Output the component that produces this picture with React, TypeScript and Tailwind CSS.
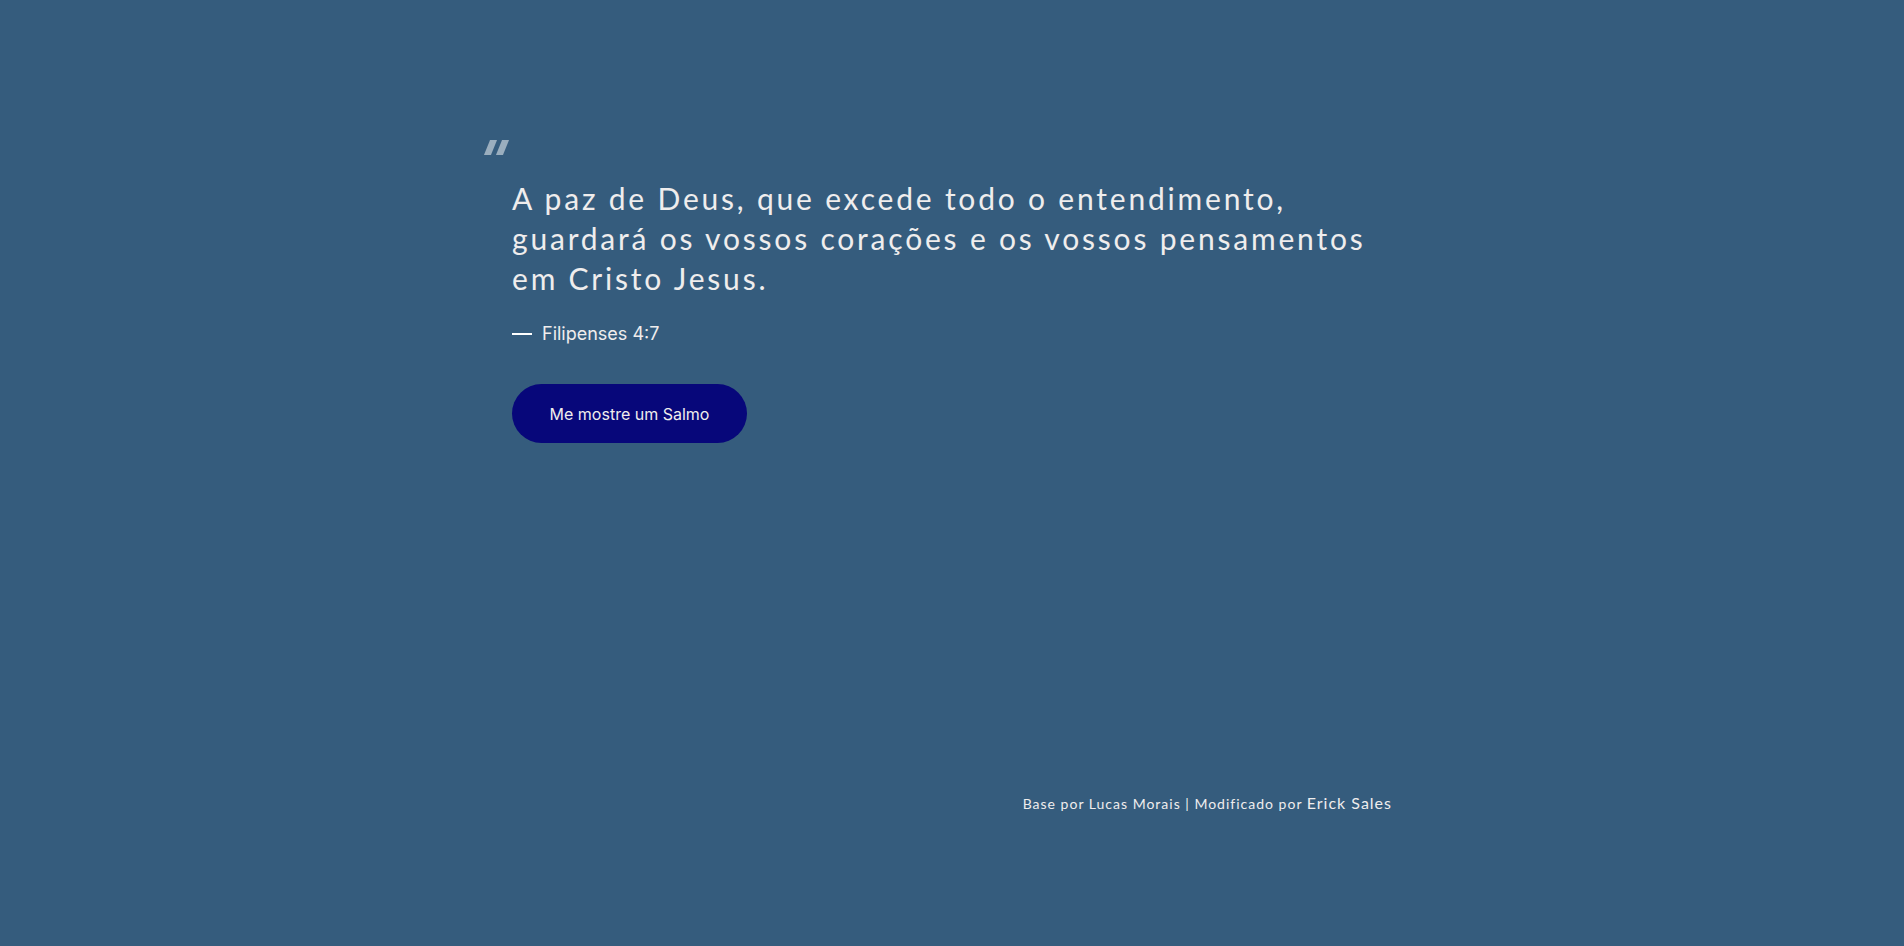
import React from "react";

export default function App() {
  return (
    <div className="min-h-screen w-full bg-[#355c7d] flex flex-col items-center font-['Inter',sans-serif]">
      <div className="w-[880px] pt-[133px] flex flex-col">
        {/* Quote */}
        <div className="relative">
          <span className="absolute -left-[25px] top-[7px] flex gap-[5px] -skew-x-[22deg]">
            <span className="w-[7px] h-[15px] bg-white/50" />
            <span className="w-[7px] h-[15px] bg-white/50" />
          </span>
          <p className="pt-[45px] text-[30px] leading-[40px] tracking-[2.8px] font-normal text-[#efeded] font-['Lato',sans-serif]">
            A paz de Deus, que excede todo o entendimento,
            <br />
            guardará os vossos corações e os vossos pensamentos
            <br />
            em Cristo Jesus.
          </p>
        </div>

        {/* Reference */}
        <div className="mt-[22px] flex items-center gap-[10px] text-[#efeded]">
          <span className="w-[20px] h-[2px] bg-white" />
          <span className="text-[18px] leading-[28px]">Filipenses 4:7</span>
        </div>

        {/* Button */}
        <div className="mt-[36px]">
          <button className="w-[235px] h-[59px] rounded-full bg-[#07077a] text-[#f0eded] text-[16px] font-normal cursor-pointer">
            Me mostre um Salmo
          </button>
        </div>

        {/* Footer */}
        <div className="mt-[348px] flex justify-end items-baseline text-[#efeded] text-[14px] tracking-[1px] font-['Lato',sans-serif]">
          <span>Base por Lucas Morais | Modificado por&nbsp;</span>
          <span className="text-[16px]">Erick Sales</span>
        </div>
      </div>
    </div>
  );
}
